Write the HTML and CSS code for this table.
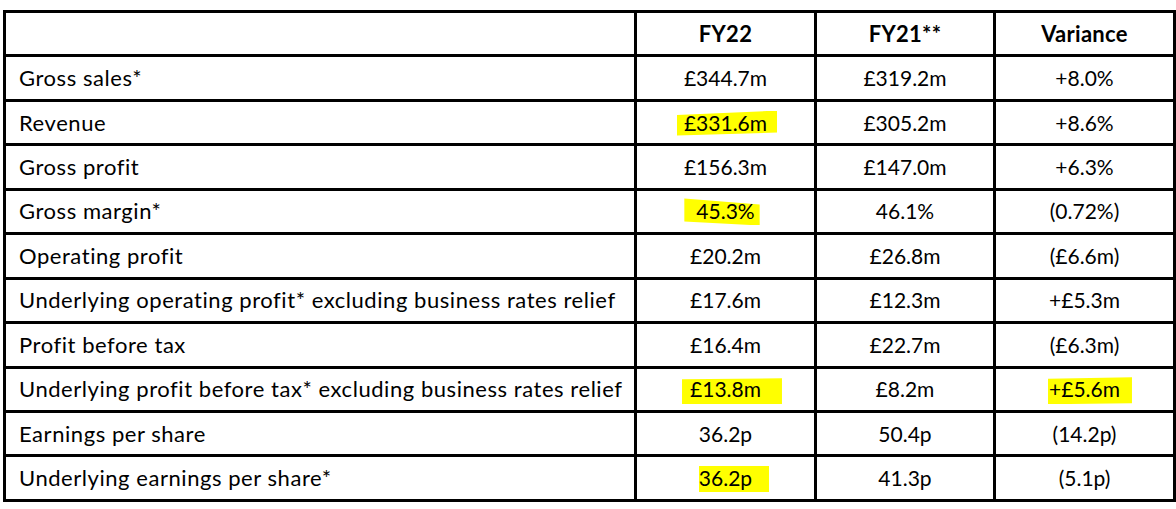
FILE: index.html
```html
<!DOCTYPE html>
<html>
<head>
<meta charset="utf-8">
<link rel="stylesheet" href="styles.css">
</head>
<body>
<table class="fin">
  <colgroup>
    <col class="c-label"><col class="c-num"><col class="c-num2"><col class="c-var">
  </colgroup>
  <thead>
    <tr><th></th><th>FY22</th><th>FY21**</th><th>Variance</th></tr>
  </thead>
  <tbody>
    <tr><td>Gross sales*</td><td>£344.7m</td><td>£319.2m</td><td>+8.0%</td></tr>
    <tr><td>Revenue</td><td><span class="hl hl-a">£331.6m</span></td><td>£305.2m</td><td>+8.6%</td></tr>
    <tr><td>Gross profit</td><td>£156.3m</td><td>£147.0m</td><td>+6.3%</td></tr>
    <tr><td>Gross margin*</td><td><span class="hl hl-b">45.3%</span></td><td>46.1%</td><td>(0.72%)</td></tr>
    <tr><td>Operating profit</td><td>£20.2m</td><td>£26.8m</td><td>(£6.6m)</td></tr>
    <tr><td>Underlying operating profit* excluding business rates relief</td><td>£17.6m</td><td>£12.3m</td><td>+£5.3m</td></tr>
    <tr><td>Profit before tax</td><td>£16.4m</td><td>£22.7m</td><td>(£6.3m)</td></tr>
    <tr><td>Underlying profit before tax* excluding business rates relief</td><td><span class="hl hl-c">£13.8m</span></td><td>£8.2m</td><td><span class="hl hl-d">+£5.6m</span></td></tr>
    <tr><td>Earnings per share</td><td>36.2p</td><td>50.4p</td><td>(14.2p)</td></tr>
    <tr><td>Underlying earnings per share*</td><td><span class="hl hl-e">36.2p</span></td><td>41.3p</td><td>(5.1p)</td></tr>
  </tbody>
</table>
</body>
</html>
```
FILE: styles.css
```css
html, body {
  margin: 0;
  padding: 0;
  background: #fff;
}
body {
  padding: 10px 0 0 3px;
}
.fin {
  border-collapse: separate;
  border-spacing: 0;
  border-top: 3px solid #000;
  border-left: 3px solid #000;
  table-layout: fixed;
  width: 1170px;
  font-family: Lato, "Liberation Sans", sans-serif;
  font-size: 21px;
  color: #000;
}
.c-label { width: 631px; }
.c-num { width: 180px; }
.c-num2 { width: 179px; }
.c-var { width: 180px; }
.fin th, .fin td {
  border-right: 3px solid #000;
  border-bottom: 3px solid #000;
  height: 40.45px;
  padding: 0 0 1px 0;
  text-align: center;
  vertical-align: middle;
  white-space: nowrap;
}
.fin th {
  font-weight: bold;
  font-size: 22px;
  letter-spacing: 0.3px;
}
.fin td:first-child {
  text-align: left;
  padding-left: 13px;
  font-size: 22px;
  letter-spacing: 0.55px;
}
.hl {
  display: inline-block;
  position: relative;
  isolation: isolate;
  line-height: 24px;
}
.hl::before {
  content: "";
  position: absolute;
  z-index: -1;
  background: #ffff00;
}
.hl-a::before {
  left: -7px; right: -10px; top: 0; bottom: -1px;
  clip-path: polygon(0 18%, 100% 0, 100% 88%, 0 100%);
}
.hl-b::before {
  left: -12px; right: -5px; top: -1px; bottom: -2px;
  clip-path: polygon(0 0, 100% 22%, 100% 100%, 0 85%);
}
.hl-c::before {
  left: -8px; right: -21px; top: 1px; bottom: -3px;
  clip-path: polygon(0 4%, 100% 0, 100% 100%, 0 100%);
}
.hl-d::before {
  left: -1px; right: -12px; top: 0; bottom: -3px;
  clip-path: polygon(0 6%, 100% 0, 100% 96%, 0 100%);
}
.hl-e::before {
  left: 0; right: -17px; top: 0; bottom: -2px;
  clip-path: polygon(0 0, 100% 0, 100% 100%, 0 100%);
}
```
